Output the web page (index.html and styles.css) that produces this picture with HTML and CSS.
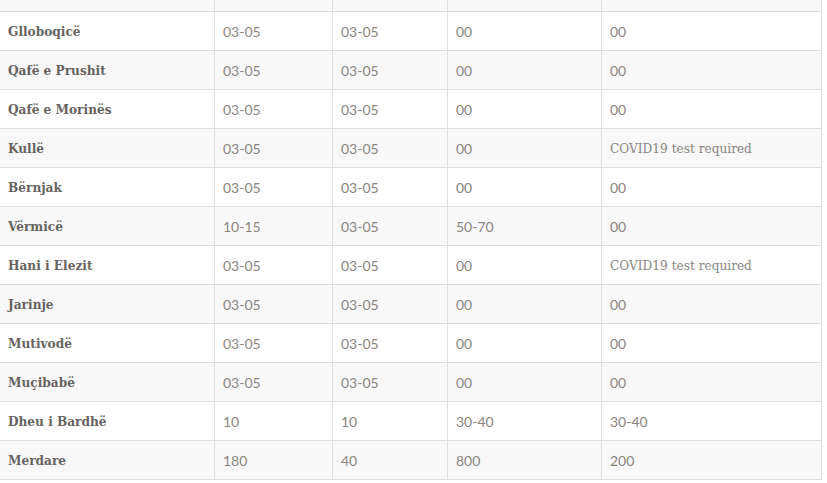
FILE: index.html
```html
<!DOCTYPE html>
<html lang="sq">
<head>
<meta charset="utf-8">
<title>Pikat kufitare</title>
<link rel="stylesheet" href="styles.css">
</head>
<body>
<div class="wrap">
<table class="crossings">
  <colgroup>
    <col class="c1"><col class="c2"><col class="c3"><col class="c4"><col class="c5">
  </colgroup>
  <thead>
    <tr class="head">
      <th></th><th></th><th></th><th></th><th></th>
    </tr>
  </thead>
  <tbody>
    <tr><td class="name">Glloboqicë</td><td>03-05</td><td>03-05</td><td>00</td><td>00</td></tr>
    <tr><td class="name">Qafë e Prushit</td><td>03-05</td><td>03-05</td><td>00</td><td>00</td></tr>
    <tr><td class="name">Qafë e Morinës</td><td>03-05</td><td>03-05</td><td>00</td><td>00</td></tr>
    <tr><td class="name">Kullë</td><td>03-05</td><td>03-05</td><td>00</td><td class="note">COVID19 test required</td></tr>
    <tr><td class="name">Bërnjak</td><td>03-05</td><td>03-05</td><td>00</td><td>00</td></tr>
    <tr><td class="name">Vërmicë</td><td>10-15</td><td>03-05</td><td>50-70</td><td>00</td></tr>
    <tr><td class="name">Hani i Elezit</td><td>03-05</td><td>03-05</td><td>00</td><td class="note">COVID19 test required</td></tr>
    <tr><td class="name">Jarinje</td><td>03-05</td><td>03-05</td><td>00</td><td>00</td></tr>
    <tr><td class="name">Mutivodë</td><td>03-05</td><td>03-05</td><td>00</td><td>00</td></tr>
    <tr><td class="name">Muçibabë</td><td>03-05</td><td>03-05</td><td>00</td><td>00</td></tr>
    <tr><td class="name">Dheu i Bardhë</td><td>10</td><td>10</td><td>30-40</td><td>30-40</td></tr>
    <tr><td class="name">Merdare</td><td>180</td><td>40</td><td>800</td><td>200</td></tr>
  </tbody>
</table>
</div>
</body>
</html>
```
FILE: styles.css
```css
html, body {
  margin: 0;
  padding: 0;
  background: #ffffff;
  overflow: hidden;
}

.wrap {
  margin-top: -28px;
  margin-left: -1px;
}

.crossings {
  border-collapse: collapse;
  table-layout: fixed;
  width: 822px;
  font-family: "Lato", "Open Sans", sans-serif;
  font-size: 14px;
  color: #8a8580;
}

.c1 { width: 215px; }
.c2 { width: 118px; }
.c3 { width: 115px; }
.c4 { width: 154px; }
.c5 { width: 220px; }

.crossings th,
.crossings td {
  border: 1px solid #dedede;
  height: 39px;
  padding: 0 8px;
  text-align: left;
  vertical-align: middle;
  box-sizing: border-box;
}

.crossings th {
  background: #f8f8f8;
}

.crossings tbody tr:nth-child(even) td {
  background: #f8f8f8;
}

.crossings td.name {
  font-family: "DejaVu Serif Condensed", "DejaVu Serif", serif;
  font-weight: bold;
  font-size: 13.5px;
  color: #676360;
}

.crossings td.note {
  font-family: "DejaVu Serif Condensed", "DejaVu Serif", serif;
  font-size: 13.5px;
  color: #8a8580;
}
```
